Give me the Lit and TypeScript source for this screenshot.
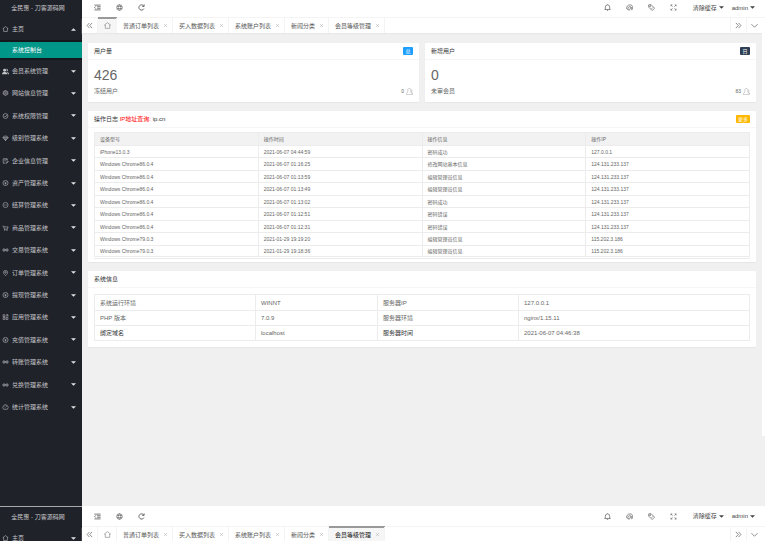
import { LitElement, html, css, svg } from "lit";
import { customElement, property } from "lit/decorators.js";
import { classMap } from "lit/directives/class-map.js";

const shapes: Record<string, unknown> = {
  home: svg`<path d="M1 7 8 1.500l7 5.500h-2v7.500H3V7z"/>`,
  users: svg`<g fill="currentColor" stroke="none"><circle cx="6" cy="5" r="3.4"/><path d="M0 14c0-4 3-4 4.500-5h3C9 10 12 10 12 14z"/><path d="M9.500 1.800a3.200 3.200 0 1 1 1.300 6.300C11.500 9.500 16 9.500 16 14h-2.800c0-3-1-4-2.700-5 1-2 1-5-1-7.200z"/></g>`,
  gear: svg`<circle cx="8" cy="8" r="5.500"/><circle cx="8" cy="8" r="2.200"/><path stroke-dasharray="2.500 2.500" d="M8 1a7 7 0 1 1 0 14A7 7 0 0 1 8 1"/>`,
  check: svg`<circle cx="8" cy="8" r="6.500"/><path d="m5 8 2.500 2.500L12 5"/>`,
  gem: svg`<path d="M4 3h8l3 4-7 8-7-8zM1 7h14M5.500 7 8 14l2.500-7"/>`,
  form: svg`<path d="M8 14H2V2h10v5M5 5h4M5 8h3M10 14l1-3 3-3 1.500 1.500-3 3.500zM12 2v4"/>`,
  yen: svg`<circle cx="8" cy="8" r="6.800"/><path d="m5.500 4.500 2.500 3 2.500-3M8 8v4M5.500 9h5"/>`,
  dots: svg`<circle cx="8" cy="8" r="6.800"/><path d="M4 8h2m1 0h2m1 0h2"/>`,
  cart: svg`<path d="M0 3h3l2 8h8l2-6H4"/><circle cx="6" cy="13.500" r="1"/><circle cx="12" cy="13.500" r="1"/>`,
  link: svg`<path stroke-width="2" d="M8 8C6 4 1 4 1 8s5 4 7 0 7-4 7 0-5 4-7 0"/>`,
  pin: svg`<path d="M8 15C4 11 2.500 9 2.500 6.500a5.500 5.500 0 0 1 11 0C13.500 9 12 11 8 15z"/><circle cx="8" cy="6.500" r="2"/>`,
  apps: svg`<path d="M1.500 2h5v5h-5zM1.500 9.500h5v5h-5zM9.500 9.500h5v5h-5zM9 7l5.500-5M10 2h4.500v5"/>`,
  stats: svg`<path d="M3 14a7 7 0 1 1 10 0zM8 9l3-3M4 8h1M8 4v1"/>`,
  shrink: svg`<path d="M1 2.500h14M7 6.200h8M7 9.800h8M1 13.500h14M4 5.500 1.500 8 4 10.500"/>`,
  globe: svg`<g stroke-width="1"><circle cx="8" cy="8" r="6.500"/><path d="M2 5.500h12M2 10.500h12M8 1.500c-4 4-4 9 0 13 4-4 4-9 0-13"/></g>`,
  refresh: svg`<path stroke-width="1.600" d="M13.500 10.500a6 6 0 1 1-.5-6M14 1v4.500H9.500"/>`,
  bell: svg`<path d="M3 12.500V7a5 5 0 0 1 10 0v5.500M1 12.500h14M6.500 15h3M8 1v1"/>`,
  theme: svg`<path d="M2 12C0 6 4 2 9 2c5 0 6 3 6 6s-1 5-2 6M4 13c0-5 2-7 5-7s3 3 1 4-3 3-2 4M4 13l4 1M12 7v6"/>`,
  tag: svg`<path d="M1.500 2 7 1.500l8 8L9.500 15l-8-8z"/><circle cx="5" cy="5" r="1.200"/><path d="m8 11 3-3"/>`,
  expand: svg`<path stroke-width="1.200" d="M2 5.500V2h3.500M2 2l4 4M10.500 2H14v3.500M14 2l-4 4M2 10.500V14h3.500M2 14l4-4M14 10.500V14h-3.500M14 14l-4-4"/>`,
  prev: svg`<path d="M8 2 2.500 8 8 14M14 2 8.500 8 14 14"/>`,
  next: svg`<path d="m2 2 5.500 6L2 14M8 2l5.500 6L8 14"/>`,
  down: svg`<path d="m1 5 7 7 7-7"/>`,
  close: svg`<path d="m3 3 10 10M13 3 3 13"/>`,
  caretDown: svg`<path fill="currentColor" stroke="none" d="M0 4h16l-8 8z"/>`,
  caretUp: svg`<path fill="currentColor" stroke="none" d="M0 12h16L8 4z"/>`,
  person: svg`<path d="M1 15v-3l3-2V4c0-4 7-4 7 0v6l3 2v3zM11 4c3 0 3 3 2 6l2 2v3"/>`,
};

const icon = (name: string) => html`<svg
  class="icon ${name}"
  viewBox="0 0 16 16"
  aria-hidden="true"
>${shapes[name]}</svg>`;

const shared = css`
  * { box-sizing: border-box; }
  :host { display: block; }
  button, a { color: inherit; font: inherit; text-decoration: none; }
  button {
    display: flex; align-items: center; justify-content: center;
    padding: 0; border: 0; background: none; white-space: nowrap;
  }
  .icon {
    display: block; flex: none; width: 7px; height: 7px;
    fill: none; stroke: currentColor; stroke-width: 1.5;
  }
  .caretDown, .caretUp { width: 5px; height: 5px; }
`;

const menu: [string, string][] = [
  ["users", "会员系统管理"],
  ["gear", "网站信息管理"],
  ["check", "系统权限管理"],
  ["gem", "级别管理系统"],
  ["form", "企业信息管理"],
  ["yen", "资产管理系统"],
  ["dots", "结算管理系统"],
  ["cart", "商品管理系统"],
  ["link", "交易管理系统"],
  ["pin", "订单管理系统"],
  ["yen", "提现管理系统"],
  ["apps", "应用管理系统"],
  ["yen", "充值管理系统"],
  ["link", "转账管理系统"],
  ["link", "兑换管理系统"],
  ["stats", "统计管理系统"],
];

@customElement("side-menu")
export class SideMenu extends LitElement {
  @property({ type: Boolean }) open = false;

  static styles = [shared, css`
    :host { background: #20222a; color: #c4c5c8; }
    .brand {
      display: flex; align-items: center; justify-content: center;
      height: 20px; padding-right: 6px; color: #c9c9cb; white-space: nowrap;
    }
    .brand.tight { height: 18px; padding-bottom: 3px; }
    .item {
      display: flex; align-items: center; gap: 3px; width: 100%;
      height: 22px; padding: 0 6px 0 2px;
    }
    .item .label { flex: 1; text-align: left; }
    .item .icon:first-child { width: 7px; height: 6px; }
    .item .users:first-child { height: 7px; }
    .item .caretDown, .item .caretUp { color: #e3e3e5; }
    .sub { padding: 2px 0; background: #15171c; }
    .sub a {
      display: flex; align-items: center; height: 16px; padding-left: 12px;
      background: #009688; color: #fff;
    }
    .list .item:nth-child(5n), .list .item:nth-child(5n + 3) { height: 23px; }
  `];

  private row(name: string, label: string, open = false) {
    return html`<button class="item" aria-expanded=${open}>
      ${icon(name)}<span class="label">${label}</span>${icon(open ? "caretUp" : "caretDown")}
    </button>`;
  }

  render() {
    return html`
      <div class=${classMap({ brand: true, tight: this.open })}>全民惠 - 刀客源码网</div>
      <nav>
        ${this.row("home", "主页", this.open)}
        ${this.open ? html`
          <div class="sub"><a href="#console">系统控制台</a></div>
          <div class="list">${menu.map(([n, l]) => this.row(n, l))}</div>` : ""}
      </nav>`;
  }
}

const tabs = ["普通订单列表", "买入数据列表", "系统账户列表", "新闻分类", "会员等级管理"];

@customElement("top-bar")
export class TopBar extends LitElement {
  @property({ type: Number }) active = -1;
  @property({ type: Boolean }) tight = false;

  static styles = [shared, css`
    :host { background: #fff; color: #444; }
    .tools {
      display: flex; justify-content: space-between; height: 21px;
      padding: 0 10px 0 4px; border-bottom: 1px solid #f4f4f4;
    }
    .tools.tight { height: 18px; padding-bottom: 2px; }
    .group { display: flex; align-items: stretch; }
    .tool { width: 22px; color: #333; }
    .group.right .tool { color: #555; width: 22px; }
    .menu { gap: 2px; margin-left: 8px; }
    .tabs {
      display: flex; height: 15px; padding-right: 3px; color: #555;
      box-shadow: 0 1px 1px #e8e8e8;
    }
    .cell { width: 16px; border-right: 1px solid #f4f4f4; }
    .home { width: 19px; color: #888; }
    .tab {
      display: flex; align-items: center; gap: 4px; padding: 0 4px 0 6px;
      border-right: 1px solid #f4f4f4; white-space: nowrap;
    }
    .tab .icon { width: 5px; height: 5px; color: #aaa; }
    .active { background: #f6f6f6; box-shadow: inset 0 1px #999, 0 -1px #999; color: #111; }
    .home.active { color: #888; }
    .space { flex: 1; }
    .end { width: 16px; border-left: 1px solid #f4f4f4; }
  `];

  render() {
    return html`
      <header class=${classMap({ tools: true, tight: this.tight })}>
        <div class="group">
          <button class="tool" aria-label="侧边伸缩">${icon("shrink")}</button>
          <button class="tool" aria-label="前台">${icon("globe")}</button>
          <button class="tool" aria-label="刷新">${icon("refresh")}</button>
        </div>
        <div class="group right">
          <button class="tool" aria-label="消息">${icon("bell")}</button>
          <button class="tool" aria-label="主题">${icon("theme")}</button>
          <button class="tool" aria-label="便签">${icon("tag")}</button>
          <button class="tool" aria-label="全屏">${icon("expand")}</button>
          <button class="menu">清除缓存${icon("caretDown")}</button>
          <button class="menu">admin${icon("caretDown")}</button>
        </div>
      </header>
      <div class="tabs">
        <button class="cell" aria-label="向左">${icon("prev")}</button>
        <button class=${classMap({ cell: true, home: true, active: this.active < 0 })} aria-label="主页">${icon("home")}</button>
        ${tabs.map((t, i) => html`<div class=${classMap({ tab: true, active: i === this.active })}>
          <a href="#tab${i}">${t}</a><button aria-label="关闭">${icon("close")}</button>
        </div>`)}
        <span class="space"></span>
        <button class="end" aria-label="向右">${icon("next")}</button>
        <button class="end" aria-label="更多操作">${icon("down")}</button>
      </div>`;
  }
}

const agent = "Windows Chrome86.0.4";
const ip = "124.131.233.137";
const logs = [
  ["iPhone13.0.3", "2021-06-07 04:44:59", "密码成功", "127.0.0.1"],
  [agent, "2021-06-07 01:16:25", "修改网站基本信息", ip],
  [agent, "2021-06-07 01:13:59", "编辑管理员信息", ip],
  [agent, "2021-06-07 01:13:49", "编辑管理员信息", ip],
  [agent, "2021-06-07 01:13:02", "密码成功", ip],
  [agent, "2021-06-07 01:12:51", "密码错误", ip],
  [agent, "2021-06-07 01:12:31", "密码错误", ip],
  ["Windows Chrome79.0.3", "2021-01-29 19:19:20", "编辑管理员信息", "115.202.3.186"],
  ["Windows Chrome79.0.3", "2021-01-29 19:18:36", "编辑管理员信息", "115.202.3.186"],
];
const system = [
  ["系统运行环境", "WINNT", "服务器IP", "127.0.0.1"],
  ["PHP 版本", "7.0.9", "服务器环境", "nginx/1.15.11"],
  ["绑定域名", "localhost", "服务器时间", "2021-06-07 04:46:38"],
];

@customElement("console-page")
export class ConsolePage extends LitElement {
  static styles = [shared, css`
    :host { padding: 10px 6px; color: #666; }
    .stack { display: flex; flex-direction: column; gap: 9px; }
    .pair { display: grid; grid-template-columns: 1fr 1fr; gap: 6px; }
    .card { background: #fff; border-radius: 1px; box-shadow: 0 1px 1px #e6e6e6; }
    .head {
      display: flex; align-items: center; justify-content: space-between;
      height: 17px; padding: 0 6px; border-bottom: 1px solid #f6f6f6; color: #333;
    }
    .title { margin: 0; font: inherit; }
    .title a { color: #f00; }
    .badge {
      display: flex; align-items: center; justify-content: center;
      height: 8px; padding: 0 2px; min-width: 10px; border-radius: 1px;
      font-size: 5px; color: #fff;
    }
    .blue { background: #1e9fff; }
    .navy { background: #2f4056; }
    .amber { background: #ffb800; }
    .stat { height: 42px; padding: 6px; }
    .big { margin: 0; font-size: 14px; line-height: 18px; color: #666; }
    .foot { display: flex; justify-content: space-between; align-items: center; line-height: 10px; margin: 2px 0 0; }
    .count { display: flex; align-items: center; gap: 2px; font-size: 5px; }
    .count .icon { color: #999; stroke-width: 1; }
    .body { padding: 6px; }
    .body.logs { padding: 4px 6px 3px; }
    table {
      width: 100%; table-layout: fixed; border-collapse: collapse;
      border: 1px solid #e8e8e8;
    }
    td, th {
      padding: 0 0 0 5px; border: 1px solid #ececec; font-weight: 400;
      text-align: left; line-height: 8px; white-space: nowrap;
    }
    .log { font-size: 5px; border-bottom: 3px double #ececec; }
    .log th { background: #f2f2f2; }
    .log tr { height: 12px; }
    .log tbody tr:nth-child(even), .log thead tr { height: 13px; }
    .sys tr { height: 15px; }
    .sys tr:first-child { height: 16px; }
    .a { width: 161px; }
    .b { width: 122px; }
    .c { width: 141px; }
    .sys tr:last-child td:nth-child(odd) { color: #333; }
  `];

  private stat(title: string, badge: string, tone: string, value: number, note: string, count: number) {
    return html`<section class="card">
      <div class="head"><h2 class="title">${title}</h2><span class="badge ${tone}">${badge}</span></div>
      <div class="stat">
        <p class="big">${value}</p>
        <p class="foot"><span>${note}</span><span class="count">${count}${icon("person")}</span></p>
      </div>
    </section>`;
  }

  render() {
    return html`<div class="stack">
      <div class="pair">
        ${this.stat("用户量", "总", "blue", 426, "冻结用户", 0)}
        ${this.stat("新增用户", "日", "navy", 0, "未审会员", 83)}
      </div>
      <section class="card">
        <div class="head">
          <h2 class="title">操作日志 <a href="#ip">IP地址查询:</a> ip.cn</h2>
          <button class="badge amber">更多</button>
        </div>
        <div class="body logs">
          <table class="log">
            <thead><tr>${["设备型号", "操作时间", "操作信息", "操作IP"].map((h) => html`<th scope="col">${h}</th>`)}</tr></thead>
            <tbody>${logs.map((r) => html`<tr>${r.map((c) => html`<td>${c}</td>`)}</tr>`)}</tbody>
          </table>
        </div>
      </section>
      <section class="card">
        <div class="head"><h2 class="title">系统信息</h2></div>
        <div class="body">
          <table class="sys">
            <colgroup><col class="a"><col class="b"><col class="c"><col></colgroup>
            <tbody>${system.map((r) => html`<tr>${r.map((c) => html`<td>${c}</td>`)}</tr>`)}</tbody>
          </table>
        </div>
      </section>
    </div>`;
  }
}

@customElement("app-root")
export class AppRoot extends LitElement {
  static styles = [shared, css`
    :host {
      font: 6px/8px "Liberation Sans", "Noto Sans CJK SC", sans-serif;
      background: #f0f0f0;
    }
    .panel { display: grid; grid-template-columns: 82px minmax(0, 1fr); }
    .first { min-height: 506px; }
    .second side-menu { border-top: 1px solid #aaa; }
    .content { display: flex; align-items: flex-start; }
    .content console-page { flex: 1; }
    .gutter { width: 3px; height: 403px; background: #fff; }
  `];

  render() {
    return html`
      <div class="panel first">
        <side-menu open></side-menu>
        <main>
          <top-bar tight></top-bar>
          <div class="content"><console-page></console-page><div class="gutter"></div></div>
        </main>
      </div>
      <div class="panel second">
        <side-menu></side-menu>
        <top-bar .active=${4}></top-bar>
      </div>`;
  }
}
